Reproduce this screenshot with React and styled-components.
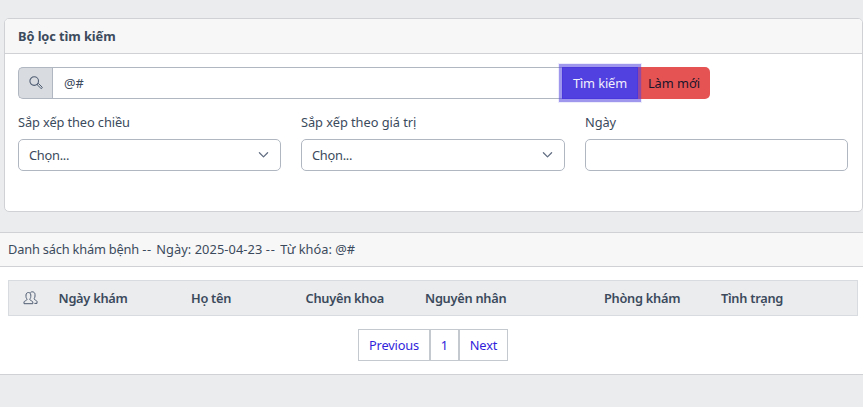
import React from "react";
import styled, { createGlobalStyle } from "styled-components";

const GlobalStyle = createGlobalStyle`
  *, *::before, *::after { box-sizing: border-box; }
  body {
    margin: 0;
    background: #ebecee;
    color: #3b4a5c;
    font: 12.8px/20px "Noto Sans", "Open Sans", sans-serif;
    overflow: hidden;
  }
  button, input { font: inherit; color: inherit; margin: 0; }
`;

const Page = styled.main`
  width: 863px;
  height: 407px;
  padding-top: 18px;
`;

const FilterCard = styled.section`
  height: 194px;
  margin-left: 4px;
  background: #fff;
  border: 1px solid #cfd1d5;
  border-radius: 5px;
  overflow: hidden;
`;

const ListCard = styled.section`
  height: 143px;
  margin-top: 20px;
  background: #fff;
  border: solid #cfd1d5;
  border-width: 1px 0;
`;

const CardHeader = styled.header`
  height: ${(p) => p.$height}px;
  padding: 0 ${(p) => p.$inset}px ${(p) => p.$lift || 0}px;
  display: flex;
  align-items: center;
  background: #f7f7f7;
  border-bottom: 1px solid #cfd1d5;
  font-weight: ${(p) => (p.$bold ? 700 : 400)};
`;

const Label = styled.span`
  display: inline-block;
  white-space: pre;
  letter-spacing: ${(p) => p.$track || 0}px;
`;

const SearchGroup = styled.form`
  display: flex;
  width: 692px;
  height: 32px;
  margin: 13px 0 0 13px;
`;

const SearchAddon = styled.span`
  width: 34px;
  display: flex;
  align-items: center;
  justify-content: center;
  background: #d8dbe0;
  border: 1px solid #b1b7c1;
  border-right: 0;
  border-radius: 5px 0 0 5px;
`;

const SearchInput = styled.input`
  width: 510px;
  padding: 0 11px;
  background: #fff;
  border: 1px solid #b1b7c1;
  border-right: 0;
  outline: 0;
`;

const GroupButton = styled.button`
  width: ${(p) => p.$width}px;
  padding: 0;
  border: 0;
  background: ${(p) => (p.$primary ? "#5141e0" : "#e55353")};
  color: ${(p) => (p.$primary ? "#f1effc" : "#18152b")};
  border-radius: ${(p) => (p.$primary ? "0" : "0 5px 5px 0")};
  ${(p) =>
    p.$primary &&
    `position: relative;
     border: 1px solid #4b38dc;
     box-shadow: 0 0 0 3px rgba(81, 65, 224, 0.5), 0 0 0 4px rgba(81, 65, 224, 0.1);`}
`;

const Fields = styled.div`
  display: grid;
  grid-template-columns: 263px 264px 263px;
  column-gap: 20px;
  margin: 13px 0 0 13px;
`;

const Field = styled.label`
  display: grid;
  grid-template-rows: 20px 32px;
  row-gap: 7px;
`;

const Control = styled.span`
  display: flex;
  align-items: center;
  justify-content: space-between;
  padding: 0 11px 0 10px;
  border: 1px solid #b1b7c1;
  border-radius: 5px;
`;

const TableHead = styled.div`
  display: grid;
  grid-template-columns: 49.5px 132.5px 114.5px 119.5px 179px 117px 1fr;
  align-items: center;
  width: 850px;
  height: 36px;
  margin: 13px 0 0 8px;
  background: #ebecee;
  border: 1px solid #d8dbe0;
  font-weight: 600;
`;

const PeopleCell = styled.span`
  display: flex;
  padding-left: 14px;
`;

const Pagination = styled.nav`
  display: flex;
  width: 150px;
  height: 32px;
  margin: 13px auto 0 358px;
`;

const PageLink = styled.a`
  width: ${(p) => p.$width}px;
  display: flex;
  align-items: center;
  justify-content: center;
  border: 1px solid #c4c9d0;
  color: #321fdb;
`;

const SearchIcon = () => (
  <svg width="14" height="14" viewBox="0 0 14 14" fill="none" stroke="#4f5d73">
    <circle cx="5.2" cy="5.1" r="4.3" strokeWidth="1.1" />
    <path d="M8.2 8.3 9.3 7.3 13.1 11.1c.6.7-.5 1.9-1.2 1.2L8.1 8.7Z" strokeWidth="1" />
  </svg>
);

const PeopleIcon = () => (
  <svg width="15" height="14" viewBox="0 0 15 14" fill="none" stroke="#4f5d73" strokeWidth="1" strokeLinejoin="round">
    <path d="M1 12.7v-1.8c0-.8 3-1.5 3-2.4 0-.8-1-1.3-1-3V4c0-3.3 4.8-3.3 4.8 0v1.5c0 1.7-1 2.2-1 3 0 .9 3 1.6 3 2.4v1.8Z" />
    <path d="M7.3 1.7C8.2.2 12 .5 12 3.5V5c0 1.7-.9 2.2-.9 3s2.9 1.6 2.9 2.4v2h-2.6" />
  </svg>
);

const Chevron = () => (
  <svg width="11" height="8" viewBox="0 0 11 8" fill="none" stroke="#636f83" strokeWidth="1.3" strokeLinecap="round" strokeLinejoin="round">
    <path d="m1.4 1.8 4.1 4.1 4.1-4.1" />
  </svg>
);

const headings = ["Ngày khám", "Họ tên", "Chuyên khoa", "Nguyên nhân", "Phòng khám", "Tình trạng"];

export default function App() {
  return (
    <>
      <GlobalStyle />
      <Page>
        <FilterCard>
          <CardHeader $height={35} $inset={13} $bold><Label $track={-0.07}>Bộ lọc tìm kiếm</Label></CardHeader>
          <SearchGroup onSubmit={(e) => e.preventDefault()}>
            <SearchAddon><SearchIcon /></SearchAddon>
            <SearchInput defaultValue="@#" aria-label="Từ khóa" />
            <GroupButton $width={76} $primary><Label $track={-0.1}>Tìm kiếm</Label></GroupButton>
            <GroupButton $width={72} type="button"><Label $track={-0.03}>Làm mới</Label></GroupButton>
          </SearchGroup>
          <Fields>
            <Field>
              <Label $track={-0.1}>Sắp xếp theo chiều</Label>
              <Control><Label $track={-0.25}>Chọn...</Label><Chevron /></Control>
            </Field>
            <Field>
              <Label $track={-0.04}>Sắp xếp theo giá trị</Label>
              <Control><Label $track={-0.25}>Chọn...</Label><Chevron /></Control>
            </Field>
            <Field>
              <Label $track={-0.1}>Ngày</Label>
              <Control />
            </Field>
          </Fields>
        </FilterCard>
        <ListCard>
          <CardHeader $height={34} $inset={8} $lift={2}>
            <Label $track={-0.18}>Danh sách khám bệnh </Label>
            <Label $track={0.8}>-- </Label>
            <Label $track={0.08}>Ngày: 2025-04-23 </Label>
            <Label $track={1}>-- </Label>
            <Label>Từ khóa: @#</Label>
          </CardHeader>
          <TableHead>
            <PeopleCell><PeopleIcon /></PeopleCell>
            {headings.map((h) => <Label key={h} $track={-0.27}>{h}</Label>)}
          </TableHead>
          <Pagination>
            <PageLink $width={72}><Label $track={-0.15}>Previous</Label></PageLink>
            <PageLink $width={29}>1</PageLink>
            <PageLink $width={49}><Label $track={-0.1}>Next</Label></PageLink>
          </Pagination>
        </ListCard>
      </Page>
    </>
  );
}
